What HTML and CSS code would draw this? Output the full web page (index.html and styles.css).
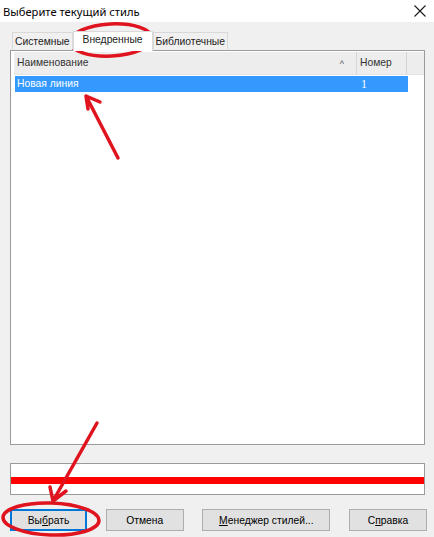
FILE: index.html
```html
<!DOCTYPE html>
<html lang="ru">
<head>
<meta charset="utf-8">
<title>Выберите текущий стиль</title>
<link rel="stylesheet" href="styles.css">
</head>
<body>
<div class="dialog">
  <div class="titlebar">
    <span class="title">Выберите текущий стиль</span>
    <svg class="close" width="12" height="12" viewBox="0 0 12 12"><path d="M0.5 0.5L11.5 11.5M11.5 0.5L0.5 11.5" stroke="#1a1a1a" stroke-width="1.1" fill="none"/></svg>
  </div>
  <div class="body">
    <div class="tabs">
      <div class="tab">Системные</div>
      <div class="tab active">Внедренные</div>
      <div class="tab">Библиотечные</div>
    </div>
    <div class="listbox">
      <div class="header">
        <div class="col col-name">Наименование<span class="caret">^</span></div>
        <div class="col col-num">Номер</div>
        <div class="col col-rest"></div>
      </div>
      <div class="row selected">
        <div class="cell cell-name">Новая линия</div>
        <div class="cell cell-num">1</div>
      </div>
    </div>
    <div class="preview"><div class="redline"></div></div>
    <div class="buttons">
      <button class="btn focused">Вы<u>б</u>рать</button>
      <button class="btn">Отмена</button>
      <button class="btn wide"><u>М</u>енеджер стилей...</button>
      <button class="btn">С<u>п</u>равка</button>
    </div>
  </div>
  <svg class="marks" width="434" height="537" viewBox="0 0 434 537">
    <g fill="none" stroke="#e0141e" stroke-width="3.5" stroke-linecap="round" stroke-linejoin="round">
      <ellipse cx="111" cy="40" rx="41" ry="16" transform="rotate(-3 111 40)"/>
      <path d="M118 158L86 96M86 96L100 102M86 96L88 109"/>
      <path d="M97 423L53 501M53 501L50 487M53 501L66 491"/>
      <ellipse cx="51" cy="519" rx="48" ry="16" transform="rotate(2 51 519)"/>
    </g>
  </svg>
</div>
</body>
</html>
```
FILE: styles.css
```css
html, body {
  margin: 0;
  padding: 0;
}
body {
  width: 434px;
  height: 537px;
  overflow: hidden;
  background: #f0f0f0;
  font-family: "Liberation Sans", Arial, sans-serif;
  font-size: 10.3px;
  color: #000;
}
.dialog {
  position: relative;
  width: 434px;
  height: 537px;
}
.titlebar {
  height: 22px;
  background: #ffffff;
  display: flex;
  align-items: center;
  justify-content: space-between;
  padding: 0 8px 0 3px;
}
.title {
  font-family: "Noto Sans", "Open Sans", sans-serif;
  font-size: 11.2px;
  color: #000;
}
.close {
  display: block;
}
.body {
  padding: 11px 9px 0 10px;
}
.tabs {
  display: flex;
  align-items: flex-end;
  height: 17px;
  padding-left: 2px;
  position: relative;
  z-index: 1;
}
.tab {
  height: 16px;
  line-height: 17px;
  padding: 0 2px;
  border: 1px solid #d9d9d9;
  border-bottom: none;
  background: #f0f0f0;
  color: #222;
  margin-bottom: 1px;
}
.tab.active {
  height: 19px;
  line-height: 16px;
  background: #ffffff;
  border-color: #d9d9d9;
  padding: 0 9px;
  margin-bottom: -1px;
}
.listbox {
  height: 392px;
  border: 1px solid #9a9a9a;
  background: #ffffff;
  padding: 1px 0 0 3px;
}
.header {
  display: flex;
  height: 22px;
  background: #ededed;
  border-bottom: 1px solid #e3e3e3;
}
.col {
  height: 22px;
  line-height: 22px;
  padding-left: 3px;
  border-right: 1px solid #d5d5d5;
  color: #333;
  position: relative;
  box-sizing: border-box;
}
.col-name {
  width: 343px;
}
.caret {
  position: absolute;
  right: 12px;
  top: 1px;
  font-size: 9px;
  color: #555;
}
.col-num {
  width: 50px;
}
.col-rest {
  flex: 1;
  border-right: none;
}
.row {
  display: flex;
  height: 16px;
  line-height: 16px;
  width: 393px;
  margin-top: 1px;
  margin-left: 1px;
}
.row.selected {
  background: #3399ff;
  color: #ffffff;
}
.cell-name {
  width: 342px;
  padding-left: 2px;
}
.cell-num {
  padding-left: 2px;
  font-family: "Liberation Serif", serif;
  font-size: 12px;
}
.preview {
  margin-top: 18px;
  height: 30px;
  border: 1px solid #9a9a9a;
  background: #ffffff;
  display: flex;
  align-items: center;
}
.redline {
  width: 100%;
  height: 7px;
  background: #ff0000;
  margin-top: 2px;
}
.buttons {
  display: flex;
  justify-content: space-between;
  margin-top: 14px;
  width: 417px;
}
.btn {
  width: 78px;
  height: 22px;
  margin: 0;
  padding: 0;
  border: 1px solid #adadad;
  background: #e1e1e1;
  font-family: "Liberation Sans", Arial, sans-serif;
  font-size: 10.3px;
  color: #000;
}
.btn.focused {
  width: 77px;
  border: 2px solid #0078d7;
}
.btn.wide {
  width: 128px;
}
.btn u {
  text-decoration-thickness: 1px;
}
.marks {
  position: absolute;
  left: 0;
  top: 0;
  pointer-events: none;
}
```
